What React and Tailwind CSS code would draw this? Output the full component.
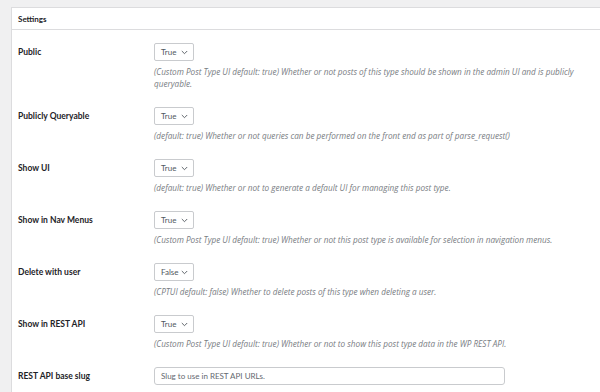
import React from "react";

const rows = [
  {
    label: "Public",
    value: "True",
    desc: "(Custom Post Type UI default: true) Whether or not posts of this type should be shown in the admin UI and is publicly queryable.",
  },
  {
    label: "Publicly Queryable",
    value: "True",
    desc: "(default: true) Whether or not queries can be performed on the front end as part of parse_request()",
  },
  {
    label: "Show UI",
    value: "True",
    desc: "(default: true) Whether or not to generate a default UI for managing this post type.",
  },
  {
    label: "Show in Nav Menus",
    value: "True",
    desc: "(Custom Post Type UI default: true) Whether or not this post type is available for selection in navigation menus.",
  },
  {
    label: "Delete with user",
    value: "False",
    desc: "(CPTUI default: false) Whether to delete posts of this type when deleting a user.",
  },
  {
    label: "Show in REST API",
    value: "True",
    desc: "(Custom Post Type UI default: true) Whether or not to show this post type data in the WP REST API.",
  },
];

function Select({ value }) {
  return (
    <div className="flex h-[18px] w-[40px] items-center justify-between rounded-[2px] border border-[#c9cbce] bg-white pl-[6px] pr-[5px] text-[8px] text-[#50575e]">
      <span>{value}</span>
      <svg width="7" height="5" viewBox="0 0 7 5" fill="none">
        <path d="M0.8 1L3.5 3.7L6.2 1" stroke="#50575e" strokeWidth="0.9" />
      </svg>
    </div>
  );
}

function Row({ label, value, desc }) {
  return (
    <div className="flex pb-[17px]">
      <div className="flex h-[18px] w-[136px] shrink-0 items-center text-[8.5px] font-bold text-[#1d2327]">
        {label}
      </div>
      <div className="flex flex-col">
        <Select value={value} />
        <p
          className="mt-[5px] max-w-[432px] text-[8.2px] italic leading-[12px] text-[#787c82]"
          style={{ fontFamily: "'Open Sans', 'Liberation Sans', sans-serif" }}
        >
          {desc}
        </p>
      </div>
    </div>
  );
}

export default function App() {
  return (
    <div
      className="h-[392px] w-[600px] overflow-hidden bg-[#f0f0f1] pl-[11px] pt-[7px]"
      style={{ fontFamily: "Lato, 'Open Sans', sans-serif" }}
    >
      <div className="h-full border-l border-t border-[#dcdcde] bg-white">
        <div className="flex h-[22px] items-center border-b border-[#dcdcde] pl-[6px] text-[8px] font-bold text-[#1d2327]">
          Settings
        </div>
        <div className="pl-[6px] pt-[13px]">
          {rows.map((r) => (
            <Row key={r.label} {...r} />
          ))}
          <div className="flex">
            <div className="flex h-[18px] w-[136px] shrink-0 items-center text-[8.5px] font-bold text-[#1d2327]">
              REST API base slug
            </div>
            <div className="flex h-[18px] w-[351px] items-center rounded-[3px] border border-[#c9cbce] bg-white px-[6px] text-[8px] text-[#646970]">
              Slug to use in REST API URLs.
            </div>
          </div>
        </div>
      </div>
    </div>
  );
}
